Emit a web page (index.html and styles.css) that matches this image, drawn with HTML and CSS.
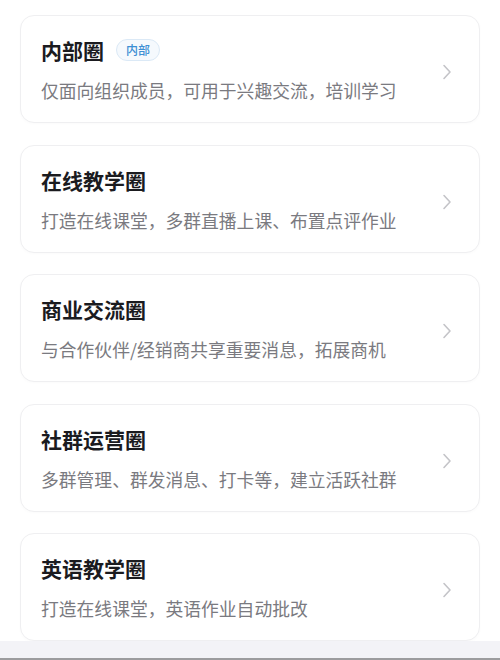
FILE: index.html
```html
<!DOCTYPE html>
<html lang="zh">
<head>
<meta charset="utf-8">
<link rel="stylesheet" href="styles.css">
</head>
<body>
<div class="page">
  <div class="list">
    <div class="card">
      <div class="info">
        <div class="title-row"><span class="title">内部圈</span><span class="badge">内部</span></div>
        <div class="desc">仅面向组织成员，可用于兴趣交流，培训学习</div>
      </div>
      <svg class="chev" width="10" height="16" viewBox="0 0 10 16"><path d="M2 1.5 L8 8 L2 14.5" fill="none" stroke="#c4c4c8" stroke-width="1.6" stroke-linecap="round" stroke-linejoin="round"/></svg>
    </div>
    <div class="card">
      <div class="info">
        <div class="title-row"><span class="title">在线教学圈</span></div>
        <div class="desc">打造在线课堂，多群直播上课、布置点评作业</div>
      </div>
      <svg class="chev" width="10" height="16" viewBox="0 0 10 16"><path d="M2 1.5 L8 8 L2 14.5" fill="none" stroke="#c4c4c8" stroke-width="1.6" stroke-linecap="round" stroke-linejoin="round"/></svg>
    </div>
    <div class="card">
      <div class="info">
        <div class="title-row"><span class="title">商业交流圈</span></div>
        <div class="desc">与合作伙伴/经销商共享重要消息，拓展商机</div>
      </div>
      <svg class="chev" width="10" height="16" viewBox="0 0 10 16"><path d="M2 1.5 L8 8 L2 14.5" fill="none" stroke="#c4c4c8" stroke-width="1.6" stroke-linecap="round" stroke-linejoin="round"/></svg>
    </div>
    <div class="card">
      <div class="info">
        <div class="title-row"><span class="title">社群运营圈</span></div>
        <div class="desc">多群管理、群发消息、打卡等，建立活跃社群</div>
      </div>
      <svg class="chev" width="10" height="16" viewBox="0 0 10 16"><path d="M2 1.5 L8 8 L2 14.5" fill="none" stroke="#c4c4c8" stroke-width="1.6" stroke-linecap="round" stroke-linejoin="round"/></svg>
    </div>
    <div class="card">
      <div class="info">
        <div class="title-row"><span class="title">英语教学圈</span></div>
        <div class="desc">打造在线课堂，英语作业自动批改</div>
      </div>
      <svg class="chev" width="10" height="16" viewBox="0 0 10 16"><path d="M2 1.5 L8 8 L2 14.5" fill="none" stroke="#c4c4c8" stroke-width="1.6" stroke-linecap="round" stroke-linejoin="round"/></svg>
    </div>
  </div>
  <div class="footer"></div>
</div>
</body>
</html>
```

FILE: styles.css
```css
* { box-sizing: border-box; }
html, body { margin: 0; padding: 0; background: #ffffff; }
body {
  font-family: "Noto Sans CJK SC", "Noto Sans", sans-serif;
  width: 500px;
  height: 660px;
  overflow: hidden;
}
.page {
  display: flex;
  flex-direction: column;
  height: 660px;
}
.list {
  display: flex;
  flex-direction: column;
  gap: 21.5px;
  padding: 15px 20px 0;
  background: #ffffff;
}
.card {
  height: 108px;
  border: 1px solid #efeff1;
  border-radius: 14px;
  background: #ffffff;
  box-shadow: 0 1px 3px rgba(0, 0, 0, 0.02);
  display: flex;
  align-items: center;
  padding: 0 27px 0 20px;
}
.info {
  flex: 1;
  display: flex;
  flex-direction: column;
  gap: 14px;
}
.title-row {
  display: flex;
  align-items: center;
  gap: 12px;
  height: 28px;
}
.title {
  font-size: 21px;
  font-weight: 700;
  color: #1b1b1f;
  line-height: 28px;
}
.badge {
  font-size: 12px;
  line-height: 20px;
  height: 22px;
  padding: 0 9px;
  color: #3d8fd4;
  background: #f5f9fd;
  border: 1px solid #dbe9f6;
  border-radius: 11px;
  font-weight: 500;
}
.desc {
  font-size: 17.8px;
  line-height: 24px;
  color: #7a7a80;
}
.chev {
  flex: none;
  display: block;
  margin-top: 6px;
}
.footer {
  flex: 1;
  background: #f3f3f7;
  border-bottom: 2px solid #9c9c9e;
}
```
